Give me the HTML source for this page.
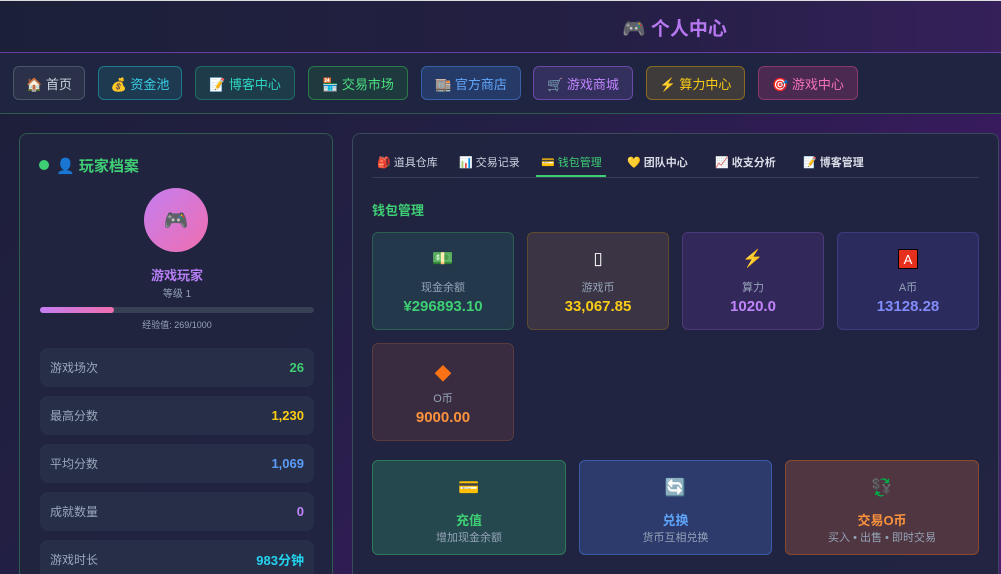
<!DOCTYPE html>
<html><head><meta charset="utf-8"><style>
*{margin:0;padding:0;box-sizing:border-box}
html{width:1001px;height:574px;overflow:hidden}
body{width:1001px;height:574px;overflow:hidden;font-family:"Liberation Sans","Noto Sans CJK SC",sans-serif;background:linear-gradient(135deg,#1c1f38 0%,#231f45 40%,#3a1a60 75%,#4a1c72 100%);position:relative;color:#cbd5e1}
.abs{position:absolute}
.hdr{left:0;top:0;width:1001px;height:53px;background:linear-gradient(90deg,#1b2038,#241f44 60%,#35205a);border-bottom:1px solid #6b3fa0;border-top:1px solid #ddd}
.title{left:622px;top:14px;font-size:19px;font-weight:bold;color:#b677f0}
.nav{left:0;top:53px;width:1001px;height:61px;background:#1f2540;border-bottom:1px solid #2f5a4e}
.nb{position:absolute;top:13px;height:34px;border-radius:6px;border:1px solid;font-size:13px;display:flex;align-items:center;justify-content:center;gap:5px}
.card{border:1px solid #2e5d4f;border-radius:8px;background:rgba(32,36,64,.96)}
.row{position:absolute;left:20px;width:274px;height:39px;border-radius:8px;background:#272f48;font-size:12px;color:#9aa6b8;display:flex;justify-content:space-between;align-items:center;padding:0 10px}
.row b{font-size:13px}
.tab{position:absolute;top:154px;font-size:11px;color:#d8dce6;font-weight:bold}
.w{position:absolute;width:142px;height:98px;border-radius:6px;border:1px solid;text-align:center;font-size:11px;color:#94a3b8}
.w .i{margin-top:16px;font-size:17px;height:22px}
.w .l{margin-top:8px}
.w .v{font-size:15px;font-weight:bold;margin-top:3px}
.a{position:absolute;top:460px;height:95px;border-radius:6px;border:1px solid;text-align:center;font-size:11px;color:#94a3b8}
.a .i{margin-top:17px;font-size:17px;height:22px}
.a .t{font-size:13px;font-weight:bold;margin-top:10px}
</style></head><body>
<div class="abs hdr"></div>
<div class="abs title">🎮 个人中心</div>
<div class="abs nav">
<div class="nb" style="left:13px;width:72px;border-color:#4a5568;background:#2a3148;color:#cbd5e1">🏠 首页</div>
<div class="nb" style="left:98px;width:84px;border-color:#1e7a8a;background:#1e3a50;color:#38d0e8">💰 资金池</div>
<div class="nb" style="left:195px;width:100px;border-color:#1f6b64;background:#1e3b4a;color:#2dd4bf">📝 博客中心</div>
<div class="nb" style="left:308px;width:100px;border-color:#2a7a4a;background:#1f3a3e;color:#4ade80">🏪 交易市场</div>
<div class="nb" style="left:421px;width:100px;border-color:#3a5fa8;background:#263a68;color:#60a5fa">🏬 官方商店</div>
<div class="nb" style="left:533px;width:100px;border-color:#6a4aa8;background:#33305e;color:#c084fc">🛒 游戏商城</div>
<div class="nb" style="left:646px;width:99px;border-color:#8a6a20;background:#3f3b3a;color:#facc15">⚡ 算力中心</div>
<div class="nb" style="left:758px;width:100px;border-color:#8a3a6a;background:#4a2a50;color:#f472b6">🎯 游戏中心</div>
</div>

<div class="abs card" style="left:19px;top:133px;width:314px;height:460px">
<div class="abs" style="left:19px;top:26px;width:10px;height:10px;border-radius:50%;background:#3ecf74"></div>
<div class="abs" style="left:36px;top:21px;font-size:15px;font-weight:bold;color:#3ecf74">👤 玩家档案</div>
<div class="abs" style="left:124px;top:54px;width:64px;height:64px;border-radius:50%;background:linear-gradient(135deg,#c47ef0,#f06eb0);display:flex;align-items:center;justify-content:center;font-size:20px">🎮</div>
<div class="abs" style="left:0;width:314px;top:131px;text-align:center;font-size:13px;font-weight:bold;color:#b67ef4">游戏玩家</div>
<div class="abs" style="left:0;width:314px;top:151px;text-align:center;font-size:10px;color:#94a3b8">等级 1</div>
<div class="abs" style="left:20px;top:173px;width:274px;height:6px;border-radius:3px;background:#364155"><div style="width:74px;height:6px;border-radius:3px;background:linear-gradient(90deg,#c47ef0,#f06eb0)"></div></div>
<div class="abs" style="left:0;width:314px;top:184px;text-align:center;font-size:9px;color:#94a3b8">经验值: 269/1000</div>
<div class="row" style="top:214px">游戏场次<b style="color:#3ecf74">26</b></div>
<div class="row" style="top:262px">最高分数<b style="color:#facc15">1,230</b></div>
<div class="row" style="top:310px">平均分数<b style="color:#5b9cf6">1,069</b></div>
<div class="row" style="top:358px">成就数量<b style="color:#c084fc">0</b></div>
<div class="row" style="top:406px">游戏时长<b style="color:#22d3ee">983分钟</b></div>
</div>

<div class="abs card" style="left:352px;top:133px;width:647px;height:460px;border-color:#3a4a5a"></div>
<div class="abs" style="left:372px;top:177px;width:607px;height:1px;background:#353d55"></div>
<div class="tab" style="left:377px;color:#cbd5e1;font-weight:normal">🎒 道具仓库</div>
<div class="tab" style="left:459px;color:#cbd5e1;font-weight:normal">📊 交易记录</div>
<div class="tab" style="left:541px;color:#3ecf74;font-weight:normal">💳 钱包管理</div>
<div class="abs" style="left:536px;top:175px;width:70px;height:2px;background:#3ecf74"></div>
<div class="tab" style="left:627px">💛 团队中心</div>
<div class="tab" style="left:715px">📈 收支分析</div>
<div class="tab" style="left:803px">📝 博客管理</div>
<div class="abs" style="left:372px;top:200px;font-size:13px;font-weight:bold;color:#3ecf74">钱包管理</div>

<div class="w" style="left:372px;top:232px;border-color:#2d5e50;background:#23384a"><div class="i">💵</div><div class="l">现金余额</div><div class="v" style="color:#3ecf74">¥296893.10</div></div>
<div class="w" style="left:527px;top:232px;border-color:#5e4a30;background:#3a3444"><div class="i" style="color:#fff">▯</div><div class="l">游戏币</div><div class="v" style="color:#facc15">33,067.85</div></div>
<div class="w" style="left:682px;top:232px;border-color:#4a3a78;background:#33285a"><div class="i">⚡</div><div class="l">算力</div><div class="v" style="color:#c084fc">1020.0</div></div>
<div class="w" style="left:837px;top:232px;border-color:#3a3e80;background:#2c2b5e"><div class="i"><span style="display:inline-block;width:20px;height:20px;background:#e4301c;color:#fff;font-size:13px;line-height:20px;border:1px solid #000">A</span></div><div class="l">A币</div><div class="v" style="color:#818cf8">13128.28</div></div>
<div class="w" style="left:372px;top:343px;border-color:#5a3a3e;background:#3a2c40"><div class="i" style="color:#f97316">◆</div><div class="l">O币</div><div class="v" style="color:#fb923c">9000.00</div></div>

<div class="a" style="left:372px;width:194px;border-color:#2e7a58;background:#25474e"><div class="i">💳</div><div class="t" style="color:#3ecf74">充值</div><div>增加现金余额</div></div>
<div class="a" style="left:579px;width:193px;border-color:#3a5ca8;background:#2c3a6c"><div class="i">🔄</div><div class="t" style="color:#60a5fa">兑换</div><div>货币互相兑换</div></div>
<div class="a" style="left:785px;width:194px;border-color:#8a4a30;background:#503640"><div class="i">💱</div><div class="t" style="color:#fb923c">交易O币</div><div>买入 • 出售 • 即时交易</div></div>
</body></html>
